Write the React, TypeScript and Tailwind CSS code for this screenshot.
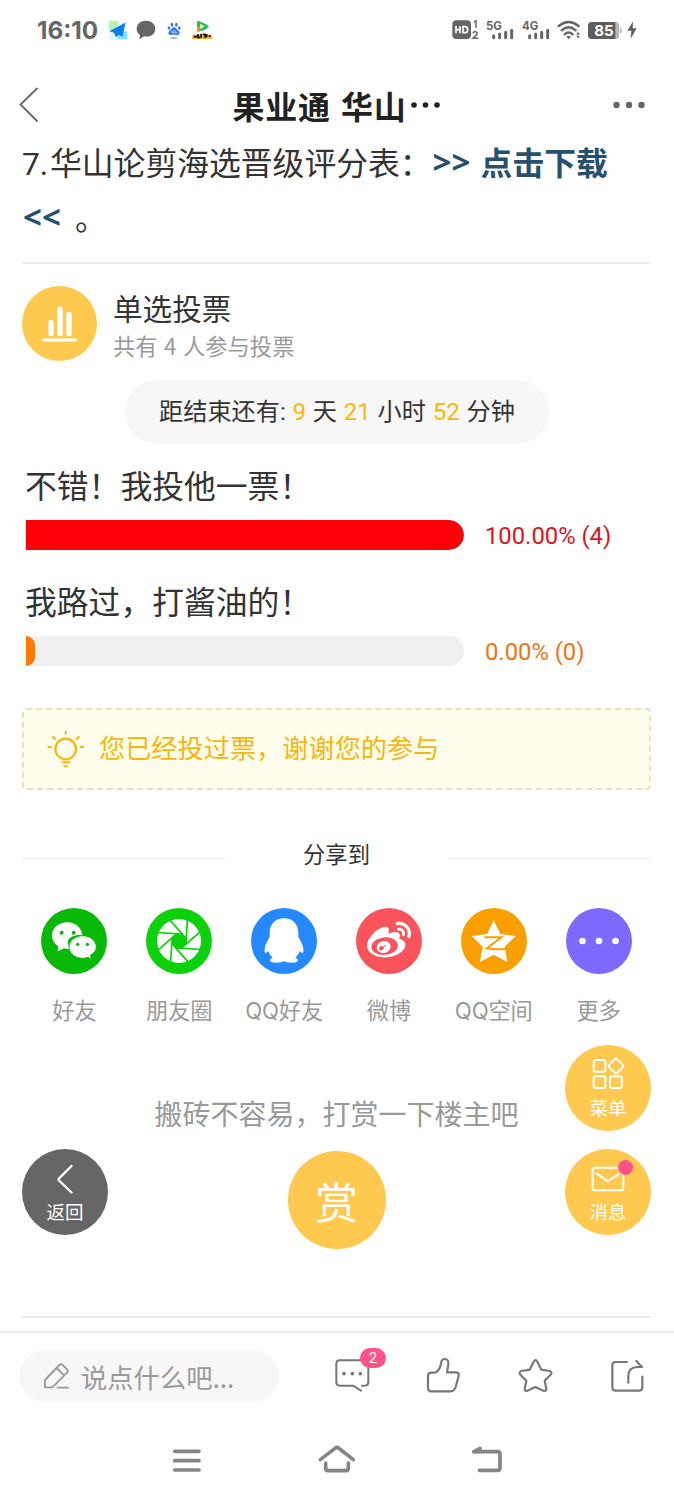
import React from "react";
import { FaWeibo } from "react-icons/fa";

const cjk = "font-['Noto_Sans_CJK_SC',sans-serif]";
const mixed = "font-[Roboto,'Noto_Sans_CJK_SC',sans-serif]";

function StatusBar() {
  return (
    <div className="flex h-[60px] shrink-0 items-center pl-[37px] text-[#666]">
      <span className="w-[70px] font-[Inter,sans-serif] text-[24.300px] leading-[60px] font-bold">16:10</span>
      <svg className="ml-[1px]" width="20" height="20" viewBox="0 0 60 60">
        <path d="M2 2h28v28H2z" fill="#b6f2b0" />
        <path d="M2 30h28v28H2z" fill="#e2f8f4" />
        <path d="M30 2h28v28H30z" fill="#e6faf6" />
        <path d="M30 34h28v24H30z" fill="#7be6fb" />
        <path d="M52 8 4 34l14 4 6 14 8-8 12 6z" fill="#0b7cf0" />
      </svg>
      <svg className="ml-[8px]" width="20" height="20" viewBox="0 0 60 60">
        <path d="M30 2C14 2 2 12 2 26c0 8 4 15 10 19l-2 13 14-9c22 4 34-9 34-23C58 12 46 2 30 2z" fill="#666" />
      </svg>
      <svg className="ml-[8px]" width="20" height="20" viewBox="0 0 60 60">
        <g fill="#3a78e8">
          <ellipse cx="24" cy="14" rx="4" ry="6" />
          <ellipse cx="37" cy="14" rx="4" ry="6" />
          <ellipse cx="15" cy="24" rx="4" ry="5" />
          <ellipse cx="46" cy="24" rx="4" ry="5" />
          <path d="M30 22c6 0 7 5 12 9s8 13-1 14c-5 0-7-1-11-1s-6 1-11 1c-9-1-6-10-1-14s6-9 12-9z" />
        </g>
        <path d="M24 32v7h5v-7M34 32v7h6" fill="none" stroke="#fff" strokeWidth="2" />
        <path d="M21 54h9" stroke="#3158d8" strokeWidth="3" />
        <path d="M30 54h9" stroke="#e05a66" strokeWidth="3" />
      </svg>
      <svg className="ml-[8px]" width="20" height="20" viewBox="0 0 60 60">
        <path d="M15 6q0-4 6-3l26 12q6 4 0 9l-26 11q-6 1-6-5z" fill="#2fbf4a" />
        <path d="M24 33 48 23q-8 8-24 10z" fill="#1597f3" />
        <path d="M15 18v12q0 6 6 4l3-1V22z" fill="#ff8a1c" />
        <path d="m25 12 12 7-12 8z" fill="#fff" />
        <path d="M1 44h58v13H1z" fill="#eeb32e" />
        <path d="M5 50h10M18 42v10h6M27 41v13M32 43h7v10M44 42v10M50 48h7" fill="none" stroke="#17120a" strokeWidth="5" />
      </svg>
      <svg className="ml-[240px] shrink-0" width="28" height="20" viewBox="0 0 84 60">
        <rect x="1" y="1" width="56" height="56" rx="12" fill="#666" />
        <path d="M12 18v22M24 18v22M12 29h12M33 20v18h6q8 0 8-9t-8-9z" fill="none" stroke="#fff" strokeWidth="5" />
        <path d="m66 6 6-3v20M63 40q2-6 8-5c8 2 5 9-8 20h16" fill="none" stroke="#666" strokeWidth="4.5" />
      </svg>
      <Signal label="5G" className="ml-[6px]" />
      <Signal label="4G" className="ml-[8px]" />
      <svg className="ml-[7px] shrink-0" width="24" height="20" viewBox="0 0 72 60">
        <g fill="none" stroke="#666" strokeWidth="7" strokeLinecap="round">
          <path d="M5 18q30-24 60 0M14 31q21-18 42 0M23 43q12-11 24 0" />
        </g>
        <path d="M28 50q7-5 14 0l-7 8z" fill="#666" />
        <path d="m58 44 5-10 5 10zM58 47l5 9 5-9z" fill="#666" />
      </svg>
      <div className="relative ml-[7px] h-[17px] w-[34px] shrink-0">
        <svg width="34" height="17" viewBox="0 0 102 51">
          <rect x="0" y="0" width="94" height="51" rx="12" fill="#b9b9b9" />
          <path d="M96 17q6 3 6 9t-6 9z" fill="#b9b9b9" />
          <path d="M12 0h70v51H12Q0 51 0 39V12Q0 0 12 0z" fill="#5e5e5e" />
        </svg>
        <span className="absolute inset-0 w-[32px] text-center font-[Inter,sans-serif] text-[15px] leading-[17px] font-bold text-white">85</span>
      </div>
      <svg className="ml-[5px] shrink-0" width="10" height="18" viewBox="0 0 30 54">
        <path d="M18 1 1 29h12l-2 24 18-31H17z" fill="#5e5e5e" />
      </svg>
    </div>
  );
}

function Signal({ label, className }: { label: string; className: string }) {
  return (
    <div className={`relative h-[20px] w-[28px] shrink-0 ${className}`}>
      <span className="absolute top-0 left-0 font-[Inter,sans-serif] text-[11.5px] leading-[12px] font-bold">{label}</span>
      <svg className="absolute top-0 left-0" width="28" height="20" viewBox="0 0 84 60">
        <path d="M23 47v6M41 42v11M59 37v16M77 31v22" stroke="#666" strokeWidth="9" strokeLinecap="round" />
      </svg>
    </div>
  );
}

function Header() {
  return (
    <div className="flex h-[89px] shrink-0 items-center justify-between pr-[29px] pl-[19px]">
      <svg width="20" height="36" viewBox="0 0 20 36" fill="none" stroke="#666" strokeWidth="1.8">
        <path d="M18.500 1 1.500 17.500l17 17" />
      </svg>
      <h1 className={`${cjk} -mr-[22px] flex items-center pt-[1px] text-[32px] leading-[44px] font-bold tracking-[0.800px] whitespace-pre text-[#222] [word-spacing:2px]`}>
        果业通 华山
        <svg className="ml-[3px]" width="32" height="8" viewBox="0 0 32 8" fill="#222">
          <circle cx="4" cy="4" r="2.800" />
          <circle cx="15.500" cy="4" r="2.800" />
          <circle cx="27" cy="4" r="2.800" />
        </svg>
      </h1>
      <svg width="32" height="8" viewBox="0 0 32 8" fill="#666">
        <circle cx="3.500" cy="4" r="3.200" />
        <circle cx="16" cy="4" r="3.200" />
        <circle cx="28.500" cy="4" r="3.200" />
      </svg>
    </div>
  );
}

function VoteOption({ title, percent, color, bar, text }: { title: string; percent: number; color: string; bar: string; text: string }) {
  return (
    <div className="h-[116px] pl-[4px]">
      <div className={`${cjk} -ml-px h-[56px] text-[31.800px] leading-[41px] text-[#333]`}>{title}</div>
      <div className="flex items-center">
        <div className="h-[30px] w-[438px] overflow-hidden rounded-r-[15px] bg-[#f0f0f0]">
          <div className={`h-full min-w-[9px] rounded-r-[15px] ${bar}`} style={{ width: `${percent}%` }} />
        </div>
        <span className={`${mixed} ml-[21px] pt-[2px] text-[23.800px] leading-[28px] whitespace-nowrap ${color}`}>{text}</span>
      </div>
    </div>
  );
}

function WechatIcon() {
  return (
    <svg width="66" height="66" viewBox="66 53 198 198">
      <path d="M145 96c-26 0-46 17-46 40 0 13 7 24 19 32l-2 15 19-9q12 3 24 1C134 156 148 132 190 134c-3-22-21-38-45-38z" fill="#fff" />
      <path d="M191 136c-23 0-41 15-41 34s18 34 41 34q9 0 16-3l10 6-2-12c10-7 17-15 17-25 0-19-18-34-41-34z" fill="#fff" stroke="#09b908" strokeWidth="3" />
      <g fill="#09b908">
        <circle cx="128" cy="127" r="6" /><circle cx="164" cy="127" r="6" />
        <circle cx="176" cy="162" r="5" /><circle cx="205" cy="162" r="5" />
      </g>
    </svg>
  );
}

function MomentsIcon() {
  return (
    <svg width="66" height="66" viewBox="-33 -33 66 66">
      <circle r="22" fill="#fff" />
      <path d="M3.300-8 8-3.300v6.600L3.300 8h-6.600L-8 3.300v-6.600L-3.300-8z" fill="#0ad10a" transform="scale(.88)" />
      {[0, 45, 90, 135, 180, 225, 270, 315].map((a) => (
        <path key={a} d="M-22.500-8.500 3-6.800" stroke="#0ad10a" strokeWidth="1.700" transform={`rotate(${a})`} />
      ))}
    </svg>
  );
}

function QQIcon() {
  return (
    <svg width="66" height="66" viewBox="696 53 198 198">
      <path d="M795 84c-26 0-43 18-43 43v13c-6 11-14 22-15 35-1 14 2 17 11 7 2 8 7 15 13 20-13 5-10 15 10 15 12 0 20-2 24-5 4 3 12 5 24 5 20 0 23-10 10-15 6-5 11-12 13-20 9 10 12 7 11-7-1-13-9-24-15-35v-13c0-25-17-43-43-43z" fill="#fff" />
    </svg>
  );
}

function QzoneIcon() {
  return (
    <svg width="66" height="66" viewBox="365 53 198 198">
      <path d="m463 90 20 41 46 6-33 32 8 46-41-22-41 22 8-46-33-32 46-6z" fill="#fff" />
      <path d="M435 141h51l-44 33q30 5 64 1" fill="none" stroke="#fa9f00" strokeWidth="6" />
    </svg>
  );
}

function Dots() {
  return (
    <svg width="66" height="66" viewBox="0 0 66 66" fill="#fff">
      <circle cx="16.500" cy="33" r="3.300" /><circle cx="33" cy="33" r="3.300" /><circle cx="49.500" cy="33" r="3.300" />
    </svg>
  );
}

const shares = [
  { label: "好友", bg: "bg-[#09b908]", icon: <WechatIcon /> },
  { label: "朋友圈", bg: "bg-[#0ad10a]", icon: <MomentsIcon /> },
  { label: "QQ好友", bg: "bg-[#2489ff]", icon: <QQIcon /> },
  { label: "微博", bg: "bg-[#f9545b]", icon: <FaWeibo className="size-[44px] text-white" /> },
  { label: "QQ空间", bg: "bg-[#fa9f00]", icon: <QzoneIcon /> },
  { label: "更多", bg: "bg-[#7d69ff]", icon: <Dots /> },
];

function FloatButton({ label, className, children }: { label: string; className: string; children: React.ReactNode }) {
  return (
    <div className={`absolute flex size-[86px] flex-col items-center rounded-full ${className}`}>
      <div className="flex h-[48px] items-end">{children}</div>
      <span className={`${cjk} text-[18.500px] leading-[28px] text-white`}>{label}</span>
    </div>
  );
}

function Content() {
  return (
    <div className="h-[1182px] shrink-0 pr-[23px] pl-[22px]">
      <div className="-mt-[13px] h-[126px] text-[31.800px] leading-[54.600px] text-[#333]">
        <p className={`${mixed} whitespace-pre`}>
          <span className="inline-block w-[28px]">7.</span>华山论剪海选晋级评分表：
          <span className="font-['Noto_Sans','Noto_Sans_CJK_SC',sans-serif] font-bold text-[#27506e]">
            <span className="relative -top-[1px] ml-px inline-block w-[48px] text-[33px] leading-[40px]">&gt;&gt;</span>点击下载
          </span>
        </p>
        <p className={`${mixed} whitespace-pre`}>
          <span className="relative -top-[1px] ml-px inline-block w-[52px] font-['Noto_Sans',sans-serif] text-[33px] leading-[40px] font-bold text-[#27506e]">&lt;&lt;</span>。
        </p>
      </div>
      <div className="h-[2px] bg-[#ececec]" />

      <div className="mt-[22px] flex h-[75px]">
        <div className="size-[75px] rounded-full bg-[#ffc84e]">
          <svg width="75" height="75" viewBox="0 0 75 75" stroke="#fff" strokeLinecap="round">
            <path d="M29 36.500v11M38 23v24.500M47 28.500v19" strokeWidth="5.400" />
            <path d="M21.500 54h32" strokeWidth="2.800" />
          </svg>
        </div>
        <div className={`${cjk} ml-[16px]`}>
          <div className="pt-[2px] text-[29.600px] leading-[40px] text-[#333]">单选投票</div>
          <div className="text-[22.300px] leading-[35px] text-[#999] [word-spacing:1.500px]">共有 4 人参与投票</div>
        </div>
      </div>

      <div className={`${mixed} mt-[19px] ml-[103px] flex h-[64px] w-[424px] items-center justify-center rounded-full bg-[#f7f7f7] pt-[1px] text-[24.200px] leading-[63px] whitespace-pre text-[#333] [word-spacing:0.700px]`}>
        <span>
          距结束还有: <span className="text-[#fdb70b]">9</span> 天 <span className="text-[#fdb70b]">21</span> 小时 <span className="text-[#fdb70b]">52</span> 分钟
        </span>
      </div>

      <div className="mt-[20px]">
        <VoteOption title="不错！我投他一票！" percent={100} bar="bg-[#ff0008]" color="text-[#dc1420]" text="100.00% (4)" />
        <VoteOption title="我路过，打酱油的！" percent={0} bar="bg-[#ff7800]" color="text-[#ec7614]" text="0.00% (0)" />
      </div>

      <div className="mt-[12px] flex h-[82px] items-center rounded-[4px] border-2 border-dashed border-[#e8e1c8] bg-[#fffdec]">
        <svg className="ml-[22px]" width="40" height="40" viewBox="137 116 120 120" fill="none" stroke="#f8b60c" strokeLinecap="round">
          <circle cx="196" cy="176" r="31" strokeWidth="6.500" />
          <path d="M196 124v6M144 170h8M241 170h8M158 140l6 6M235 140l-6 6M186 216h21M192 228h9" strokeWidth="6" />
        </svg>
        <span className={`${cjk} ml-[13px] pb-[4px] text-[26.200px] leading-[40px] text-[#f8b60c]`}>您已经投过票，谢谢您的参与</span>
      </div>

      <div className="mt-[46px] flex h-[40px] items-center justify-between">
        <div className="mt-[5px] h-px w-[203px] bg-[#ececec]" />
        <span className={`${cjk} pb-[5px] text-[22.300px] leading-[35px] text-[#333]`}>分享到</span>
        <div className="mt-[5px] h-px w-[203px] bg-[#ececec]" />
      </div>

      <div className="mt-[32px] grid grid-cols-6">
        {shares.map((s) => (
          <div key={s.label} className="flex flex-col items-center">
            <div className={`flex size-[66px] items-center justify-center overflow-hidden rounded-full ${s.bg}`}>{s.icon}</div>
            <span className="mt-[17px] font-[Inter,'Noto_Sans_CJK_SC',sans-serif] text-[22.200px] leading-[40px] tracking-[-0.100px] whitespace-nowrap text-[#999]">{s.label}</span>
          </div>
        ))}
      </div>

      <p className={`${cjk} mt-[62px] text-center text-[28px] leading-[40px] text-[#999]`}>搬砖不容易，打赏一下楼主吧</p>
      <div className="mx-auto mt-[18px] flex size-[98px] items-center justify-center rounded-full bg-[#ffc84e]">
        <span className={`${cjk} text-[43px] leading-[90px] text-white`}>赏</span>
      </div>
      <div className="mt-[67px] h-[2px] bg-[#ececec]" />
    </div>
  );
}

function Footer() {
  return (
    <div className="flex h-[87px] shrink-0 items-start border-t-2 border-[#ececec] pl-[19px]">
      <div className="mt-[17px] flex h-[52px] w-[260px] items-center rounded-full bg-[#f7f7f7]">
        <svg className="ml-[23px]" width="30" height="30" viewBox="126 183 90 90" fill="none" stroke="#999" strokeWidth="5.500" strokeLinecap="round" strokeLinejoin="round">
          <path d="M135 262v-22l43-45q5-5 10 0l13 13q5 5 0 10l-44 44zM170 204l22 22M173 263h31" />
        </svg>
        <span className={`${cjk} ml-[9px] pt-[2px] text-[26.300px] leading-[40px] text-[#999]`}>说点什么吧...</span>
      </div>
      <div className="relative mt-[24px] ml-[54px]">
        <svg width="38" height="36" viewBox="38 170 114 108" fill="none" stroke="#777" strokeWidth="6" strokeLinecap="round" strokeLinejoin="round">
          <path d="M122 271 98 256H58q-10 0-10-10v-56q0-10 10-10h76q10 0 10 10v56q0 10-10 10h-9" />
          <path d="M71 220v.1M96 220v.1M120 220v.1" strokeWidth="11" />
        </svg>
        <span className="absolute -top-[9px] left-[27px] h-[20px] w-[26px] rounded-full bg-[#ff5289] text-center font-[Roboto,sans-serif] text-[15px] leading-[20px] text-white">2</span>
      </div>
      <svg className="mt-[23px] ml-[54px]" width="36" height="38" viewBox="316 168 108 114" fill="none" stroke="#777" strokeWidth="6.500" strokeLinejoin="round">
        <path d="M325 228q0-10 10-10h10q14-4 18-23c2-13 4-18 12-18 9 0 12 7 11 15l-4 25h26q11 0 9 11l-9 33q-4 13-16 13h-57q-10 0-10-10z" />
      </svg>
      <svg className="mt-[23px] ml-[55px]" width="38" height="38" viewBox="588 167 114 114" fill="none" stroke="#777" strokeWidth="6.500" strokeLinejoin="round">
        <path d="M641 184q6-9 11 0l12 24 25 4q9 3 3 11l-18 18 5 24q0 9-9 6l-24-11-24 11q-9 3-8-6l5-24-18-18q-6-8 3-11l25-4z" />
      </svg>
      <svg className="mt-[23px] ml-[54px]" width="38" height="38" viewBox="864 166 114 114" fill="none" stroke="#777" strokeWidth="6.500" strokeLinecap="round" strokeLinejoin="round">
        <path d="M921 184h-34q-10 0-10 10v66q0 10 10 10h70q10 0 10-10v-32M925 246v-19q0-28 28-28h13l-17-18" />
      </svg>
    </div>
  );
}

function NavBar() {
  return (
    <div className="flex h-[80px] items-center pt-[4px] pl-[169px]">
      <svg width="36" height="36" viewBox="0 0 108 108" fill="none" stroke="#858585" strokeWidth="11" strokeLinecap="round">
        <path d="M17 28h73M17 56h73M17 84h73" />
      </svg>
      <svg className="ml-[112px]" width="40" height="36" viewBox="-9 424 120 108" fill="none" stroke="#858585" strokeWidth="11" strokeLinecap="round" strokeLinejoin="round">
        <path d="m1 477 44-34q6-5 12 0l43 34M17 487v15q0 8 8 8h52q8 0 8-8v-15" />
      </svg>
      <svg className="ml-[113px]" width="36" height="36" viewBox="450 425 108 108" fill="none" stroke="#858585" strokeWidth="11" strokeLinecap="round" strokeLinejoin="round">
        <path d="M462 454h70q8 0 8 8v40q0 8-8 8h-54" />
        <path d="m462 454 18-10v9z" />
      </svg>
    </div>
  );
}

export default function App() {
  return (
    <div className="relative flex h-[1500px] w-[674px] flex-col overflow-hidden bg-white">
      <StatusBar />
      <Header />
      <Content />
      <Footer />
      <NavBar />
      <FloatButton label="菜单" className="top-[1045px] left-[565px] bg-[#ffc84e]">
        <svg className="mb-[2px]" width="34" height="34" viewBox="154 83 102 102" fill="none" stroke="#fff" strokeWidth="6" strokeLinejoin="round">
          <rect x="162" y="92" width="35" height="35" rx="6" />
          <rect x="162" y="141" width="35" height="35" rx="6" />
          <rect x="211" y="141" width="35" height="35" rx="6" />
          <path d="m225 90q4-4 8 0l16 16q4 4 0 8l-16 16q-4 4-8 0l-16-16q-4-4 0-8z" />
        </svg>
      </FloatButton>
      <FloatButton label="消息" className="top-[1149px] left-[565px] bg-[#ffc84e]">
        <svg className="mb-[5px]" width="34" height="26" viewBox="154 408 102 78" fill="none" stroke="#fff" strokeWidth="6" strokeLinecap="round" strokeLinejoin="round">
          <rect x="159" y="413" width="92" height="68" rx="7" />
          <path d="m170 430 35 24 35-24" />
        </svg>
        <i className="absolute top-[11px] left-[53px] size-[15px] rounded-full bg-[#ff5289]" />
      </FloatButton>
      <FloatButton label="返回" className="top-[1149px] left-[22px] bg-[#666]">
        <svg className="mb-[3px]" width="18" height="30" viewBox="0 0 18 30" fill="none" stroke="#fff" strokeWidth="2.400" strokeLinecap="round" strokeLinejoin="round">
          <path d="M15.500 2 3 14.500q-1 1 0 2L15.500 28.500" />
        </svg>
      </FloatButton>
    </div>
  );
}
